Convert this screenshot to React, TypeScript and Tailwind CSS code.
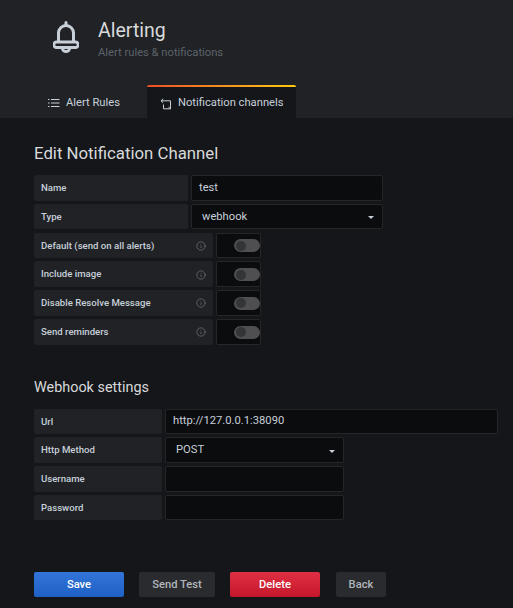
import { Info } from "lucide-react";

const labelClass =
  "flex shrink-0 items-center justify-between h-full rounded-[2px] bg-[#202226] pl-[7px] pr-[7px] pt-[1px] text-[9.6px] font-medium text-[#c7d0d9]";
const inputClass =
  "flex shrink-0 items-center h-full rounded-[2px] border border-[#262628] bg-[#0b0c0e] pt-[1px] text-[11.2px] text-[#c7d0d9]";

const TextRow = ({ label, value, labelW, inputW }: { label: string; value?: string; labelW: string; inputW: string }) => (
  <div className="flex h-[25.6px] gap-[3px]">
    <div className={`${labelClass} ${labelW}`}>{label}</div>
    <div className={`${inputClass} ${inputW} pl-[7px]`}>{value}</div>
  </div>
);

const SelectRow = ({ label, value, labelW, inputW }: { label: string; value: string; labelW: string; inputW: string }) => (
  <div className="flex h-[25.6px] gap-[3px]">
    <div className={`${labelClass} ${labelW}`}>{label}</div>
    <div className={`${inputClass} ${inputW} justify-between pl-[10px] pr-[8px]`}>
      <span>{value}</span>
      <span className="mt-[1px] h-0 w-0 border-x-[3px] border-t-[3px] border-x-transparent border-t-[#c7d0d9]" />
    </div>
  </div>
);

const SwitchRow = ({ label }: { label: string }) => (
  <div className="flex h-[25.6px] gap-[3px]">
    <div className={`${labelClass} w-[179px]`}>
      <span>{label}</span>
      <Info size={10} strokeWidth={1.5} className="text-[#7b8087]" />
    </div>
    <div className={`${inputClass} w-[45px] justify-end`}>
      <div className="flex h-[13px] w-[26px] items-center rounded-full bg-[#4f4f51] pl-[2px]">
        <div className="h-[10px] w-[10px] rounded-full bg-[#333538]" />
      </div>
    </div>
  </div>
);

const Button = ({ text, className }: { text: string; className: string }) => (
  <button className={`flex h-[25px] items-center justify-center rounded-[2px] text-[11.2px] font-medium ${className}`}>
    {text}
  </button>
);

export default function App() {
  return (
    <div
      className="h-[608px] w-[513px] overflow-hidden bg-[#141619]"
      style={{ fontFamily: "Roboto, sans-serif" }}
    >
      <header className="flex h-[118px] flex-col justify-between bg-[#202226]">
        <div className="flex pl-[53px] pt-[19px]">
          <svg width="26" height="32" viewBox="0 0 26 32" fill="none" stroke="#c7d0d9" strokeWidth="3" className="mt-[2px]">
            <path d="M13 1.5v3" strokeLinecap="round" />
            <path d="M5.5 21V12a7.5 7.5 0 0 1 15 0v9" />
            <path d="M3.5 21h19a2.7 2.7 0 0 1 0 5.4h-19a2.7 2.7 0 0 1 0-5.4z" />
            <path d="M9.5 27.5a3.5 3 0 0 0 7 0" />
          </svg>
          <div className="ml-[19px]">
            <h1 className="text-[19.5px] leading-[24px] text-[#d8d9da]">Alerting</h1>
            <p className="mt-[2px] text-[11.2px] leading-[16px] text-[#5d6269]">Alert rules &amp; notifications</p>
          </div>
        </div>
        <nav className="flex pl-[48px]">
          <div className="flex h-[33px] w-[99px] items-center pt-[3px] text-[11.2px] text-[#c7d0d9]">
            <svg width="12" height="12" viewBox="0 0 12 12" stroke="#c7d0d9" strokeWidth="1.2" className="mr-[6px]">
              <path d="M0 2.5h1.5M0 6h1.5M0 9.5h1.5M3 2.5h8.5M3 6h8.5M3 9.5h8.5" />
            </svg>
            Alert Rules
          </div>
          <div className="h-[33px] w-[149px] rounded-t-[2px] bg-gradient-to-r from-[#eb4d26] to-[#fbca0a] pt-[2px]">
            <div className="flex h-full items-center bg-[#141619] pl-[13px] pt-[2px] text-[11.2px] text-[#c7d0d9]">
              <svg width="12" height="12" viewBox="0 0 12 12" fill="none" stroke="#c7d0d9" strokeWidth="1" className="mr-[6px]">
                <path d="M3.2 0.8L1 2.8l2.2 2M1 2.8h9.5v8H3.5V6.5M8.5 9l2 1.8" />
              </svg>
              Notification channels
            </div>
          </div>
        </nav>
      </header>

      <main className="px-[34px]">
        <h2 className="mt-[25px] text-[16.8px] leading-[20px] text-[#d8d9da]">Edit Notification Channel</h2>
        <div className="mt-[12px] flex flex-col gap-[3.2px]">
          <TextRow label="Name" value="test" labelW="w-[154px]" inputW="w-[192px]" />
          <SelectRow label="Type" value="webhook" labelW="w-[154px]" inputW="w-[192px]" />
          <SwitchRow label="Default (send on all alerts)" />
          <SwitchRow label="Include image" />
          <SwitchRow label="Disable Resolve Message" />
          <SwitchRow label="Send reminders" />
        </div>

        <h2 className="mt-[33px] text-[14.4px] leading-[20px] text-[#d8d9da]">Webhook settings</h2>
        <div className="mt-[11px] flex flex-col gap-[3.2px]">
          <TextRow label="Url" value="http://127.0.0.1:38090" labelW="w-[128px]" inputW="w-[333px]" />
          <SelectRow label="Http Method" value="POST" labelW="w-[128px]" inputW="w-[179px]" />
          <TextRow label="Username" labelW="w-[128px]" inputW="w-[179px]" />
          <TextRow label="Password" labelW="w-[128px]" inputW="w-[179px]" />
        </div>

        <div className="mt-[52px] flex">
          <Button text="Save" className="w-[90px] bg-gradient-to-b from-[#3274d9] to-[#1f60c4] text-white" />
          <Button text="Send Test" className="ml-[15px] w-[76px] bg-[#2a2b2e] text-[#b0b5bb]" />
          <Button text="Delete" className="ml-[15px] w-[90px] bg-gradient-to-b from-[#e02f44] to-[#c4162a] text-white" />
          <Button text="Back" className="ml-[16px] w-[50px] bg-[#2a2b2e] text-[#b0b5bb]" />
        </div>
      </main>
    </div>
  );
}
